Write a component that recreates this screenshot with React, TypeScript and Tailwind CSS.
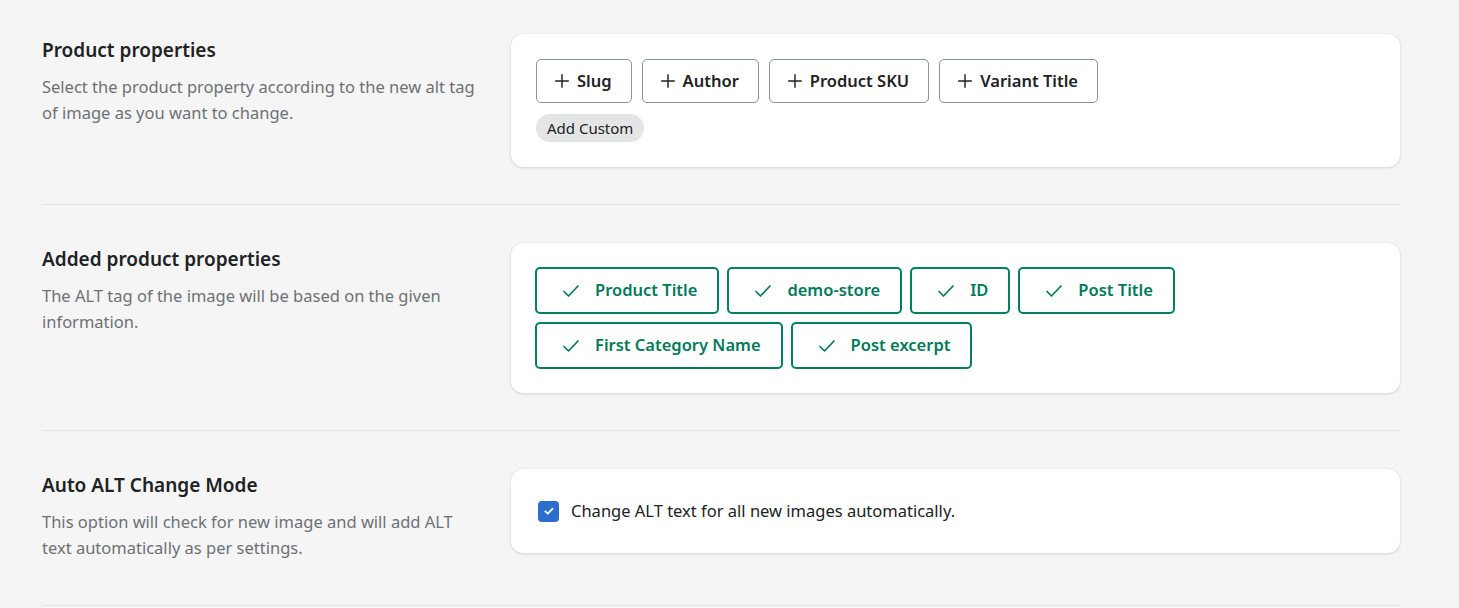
const font = { fontFamily: '"Noto Sans", "Open Sans", sans-serif' };

function PlusIcon() {
  return (
    <svg viewBox="0 0 20 20" className="h-[18px] w-[18px]" fill="none" stroke="currentColor" strokeWidth="1.6" strokeLinecap="round">
      <path d="M10 3v14M3 10h14" />
    </svg>
  );
}

function CheckIcon() {
  return (
    <svg viewBox="0 0 20 20" className="h-5 w-5" fill="none" stroke="currentColor" strokeWidth="1.7" strokeLinecap="round" strokeLinejoin="round">
      <path d="M3 10.5l4.5 4.5L17 5" />
    </svg>
  );
}

function Section({
  title,
  description,
  children,
  first,
  last,
}: {
  title: string;
  description: React.ReactNode;
  children: React.ReactNode;
  first?: boolean;
  last?: boolean;
}) {
  return (
    <section
      className={`grid grid-cols-[469px_1fr] items-start border-b border-[#e1e3e5] ${first ? "pt-[34px]" : "pt-[38px]"} ${
        last ? "pb-[44px]" : "pb-[37px]"
      }`}
    >
      <div className="pt-[4px] pr-6">
        <h2 className="text-[19px] font-semibold leading-6 text-[#202223]">{title}</h2>
        <p className="mt-[12px] text-[16.5px] leading-[26px] text-[#6d7175]">{description}</p>
      </div>
      <div className="rounded-xl bg-white shadow-[0_0_1px_rgba(0,0,0,0.15),0_1px_3px_rgba(0,0,0,0.12)]">{children}</div>
    </section>
  );
}

const available = ["Slug", "Author", "Product SKU", "Variant Title"];
const added = ["Product Title", "demo-store", "ID", "Post Title", "First Category Name", "Post excerpt"];

export default function App() {
  return (
    <div className="min-h-[608px] bg-[#f5f5f5] px-[42px]" style={font}>
      <div className="w-[1358px]">
        <Section
          first
          title="Product properties"
          description={
            <>
              Select the product property according to the new alt tag
              <br />
              of image as you want to change.
            </>
          }
        >
          <div className="px-[25px] pt-[25px] pb-[25px]">
            <div className="flex flex-wrap gap-[10px]">
              {available.map((p) => (
                <button
                  key={p}
                  type="button"
                  className="inline-flex h-[44px] items-center gap-[6px] rounded-[5px] border border-[#8c9196] bg-white pl-[16px] pr-[19px] text-[16.5px] font-semibold text-[#202223]"
                >
                  <PlusIcon />
                  {p}
                </button>
              ))}
            </div>
            <span className="mt-[11px] inline-flex h-[28px] items-center rounded-full bg-[#e4e5e7] px-[11px] text-[15px] text-[#202223]">
              Add Custom
            </span>
          </div>
        </Section>

        <Section
          title="Added product properties"
          description={
            <>
              The ALT tag of the image will be based on the given
              <br />
              information.
            </>
          }
        >
          <div className="flex flex-wrap gap-[8px] px-[24px] pt-[24px] pb-[24px]">
            {added.map((p) => (
              <button
                key={p}
                type="button"
                className="inline-flex h-[47px] items-center gap-[14px] rounded-[5px] border-2 border-[#008060] bg-white pl-[24px] pr-[20px] text-[16.5px] font-semibold text-[#007a5a]"
              >
                <CheckIcon />
                {p}
              </button>
            ))}
          </div>
        </Section>

        <Section
          last
          title="Auto ALT Change Mode"
          description={
            <>
              This option will check for new image and will add ALT
              <br />
              text automatically as per settings.
            </>
          }
        >
          <label className="flex h-[84px] items-center gap-[12px] px-[27px]">
            <span className="flex h-[21px] w-[21px] items-center justify-center rounded-[4px] bg-[#2c6ecb] text-white">
              <svg viewBox="0 0 20 20" className="h-3 w-3" fill="none" stroke="currentColor" strokeWidth="3" strokeLinecap="round" strokeLinejoin="round">
                <path d="M4 10.5l4 4L16 6" />
              </svg>
            </span>
            <span className="text-[16.5px] text-[#202223]">Change ALT text for all new images automatically.</span>
          </label>
        </Section>
      </div>
    </div>
  );
}
